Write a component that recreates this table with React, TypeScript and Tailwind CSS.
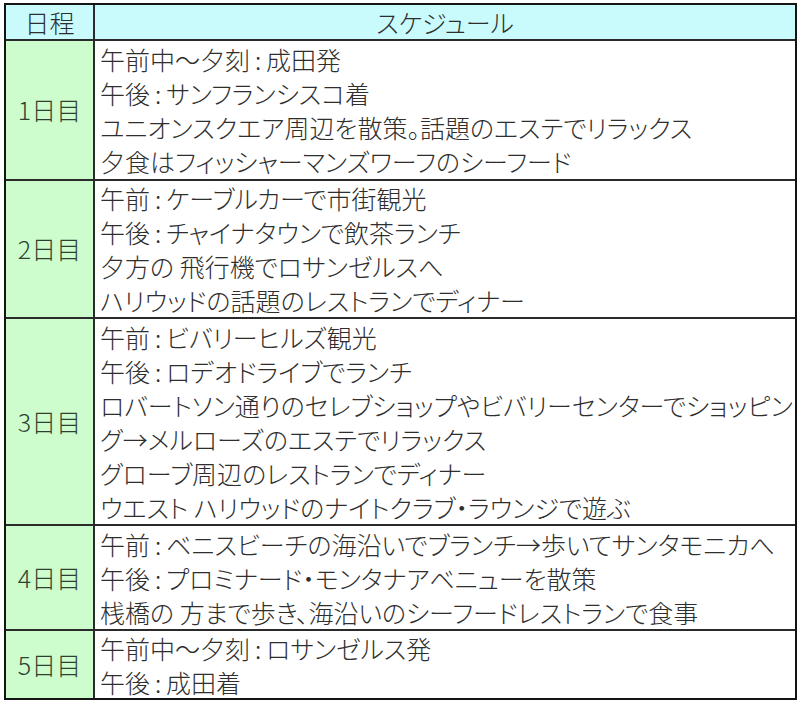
const SCHEDULE: { day: string; h: string; lines: string[] }[] = [
  {
    day: '1日目',
    h: 'h-[138px]',
    lines: [
      '午前中～夕刻:成田発',
      '午後:サンフランシスコ着',
      'ユニオンスクエア周辺を散策。話題のエステでリラックス',
      '夕食はフィッシャーマンズワーフのシーフード',
    ],
  },
  {
    day: '2日目',
    h: 'h-[138px]',
    lines: [
      '午前:ケーブルカーで市街観光',
      '午後:チャイナタウンで飲茶ランチ',
      '夕方の 飛行機でロサンゼルスへ',
      'ハリウッドの話題のレストランでディナー',
    ],
  },
  {
    day: '3日目',
    h: 'h-[207px]',
    lines: [
      '午前:ビバリーヒルズ観光',
      '午後:ロデオドライブでランチ',
      'ロバートソン通りのセレブショップやビバリーセンターでショッピン',
      'グ→メルローズのエステでリラックス',
      'グローブ周辺のレストランでディナー',
      'ウエスト ハリウッドのナイトクラブ・ラウンジで遊ぶ',
    ],
  },
  {
    day: '4日目',
    h: 'h-[105px]',
    lines: [
      '午前:ベニスビーチの海沿いでブランチ→歩いてサンタモニカへ',
      '午後:プロミナード・モンタナアベニューを散策',
      '桟橋の 方まで歩き、海沿いのシーフードレストランで食事',
    ],
  },
  {
    day: '5日目',
    h: 'h-[69px]',
    lines: ['午前中～夕刻:ロサンゼルス発', '午後:成田着'],
  },
];

function Line({ text }: { text: string }) {
  const idx = text.indexOf(':');
  if (idx < 0) return <div className="whitespace-nowrap leading-[34px]">{text}</div>;
  return (
    <div className="whitespace-nowrap leading-[34px]">
      {text.slice(0, idx)}
      <span className="inline-block w-[16px] text-center">:</span>
      {text.slice(idx + 1)}
    </div>
  );
}

export default function App() {
  return (
    <div className="w-[800px] h-[702px] bg-white pt-[3px] pl-[4px] overflow-hidden font-['Noto_Sans_CJK_JP',sans-serif] font-light [font-feature-settings:'palt'] text-[25px] text-[#2e2e2e]">
      <div className="w-[793px] border-2 border-[#141414]">
        <div className="flex h-[36px] bg-[#c9fbfd] border-b-2 border-[#2a2a2a]">
          <div className="w-[89px] border-r-2 border-[#2a2a2a] flex items-center justify-center leading-none">
            日程
          </div>
          <div className="flex-1 flex items-center justify-center leading-none">スケジュール</div>
        </div>
        {SCHEDULE.map((row, i) => (
          <div
            key={row.day}
            className={`flex ${row.h} ${i === 0 ? '' : 'border-t-2 border-[#2a2a2a]'}`}
          >
            <div className="w-[89px] shrink-0 bg-[#cdfdcd] border-r-2 border-[#2a2a2a] flex items-center justify-center text-[#2f3f31]">
              {row.day}
            </div>
            <div className="flex-1 flex flex-col justify-center pl-[5px] overflow-hidden">
              {row.lines.map((l) => (
                <Line key={l} text={l} />
              ))}
            </div>
          </div>
        ))}
      </div>
    </div>
  );
}
